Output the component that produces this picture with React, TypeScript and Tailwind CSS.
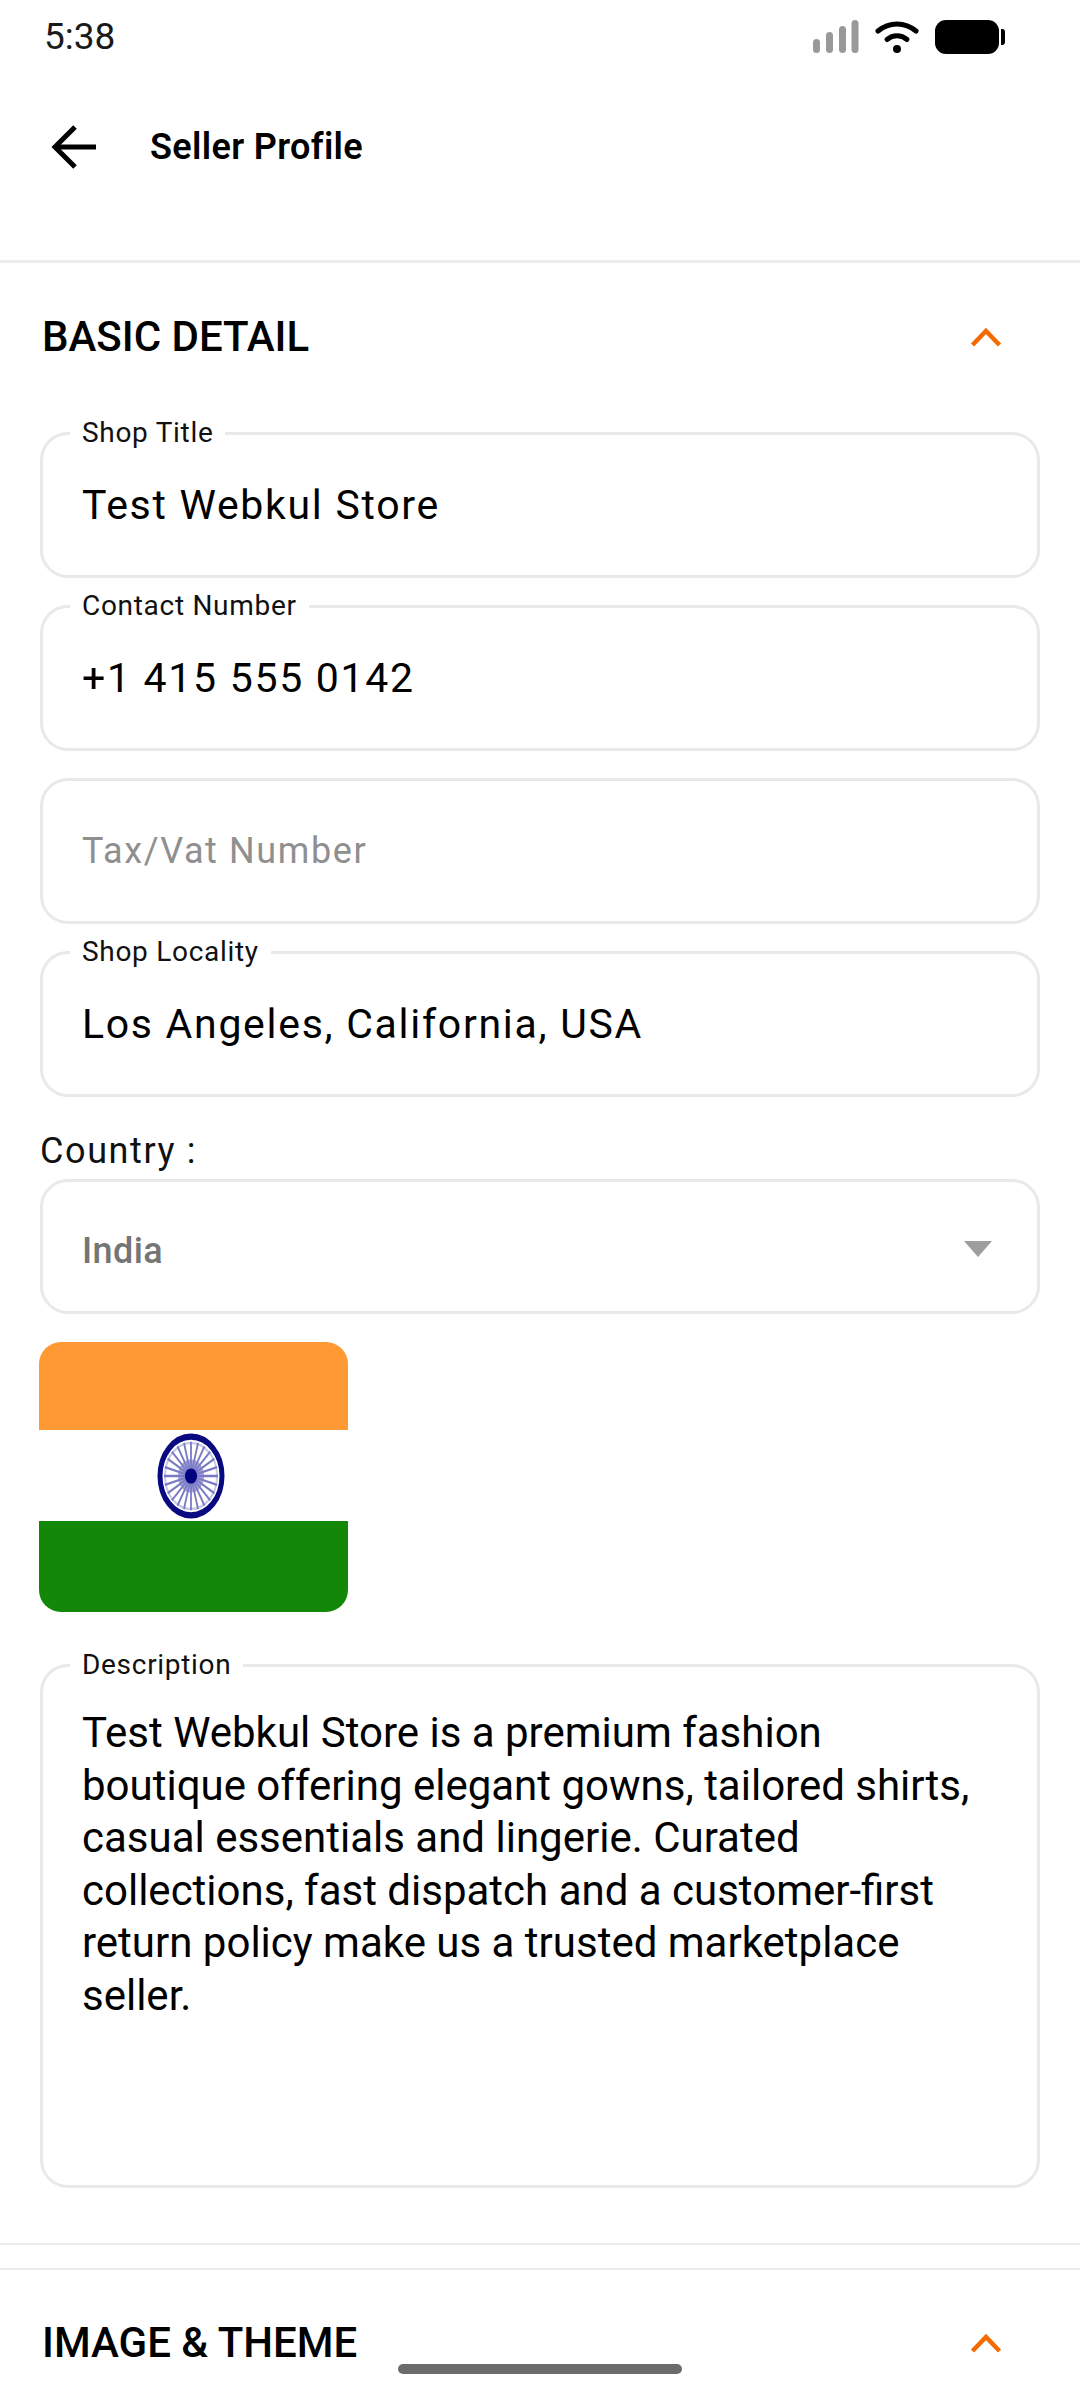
const FONT = "font-['Roboto',sans-serif]";

function SignalIcon() {
  return (
    <svg width="46" height="34" viewBox="0 0 46 34" className="text-[#999999]" fill="currentColor">
      <rect x="0" y="19" width="7" height="14" rx="3.5" />
      <rect x="13" y="12" width="7" height="21" rx="3.5" />
      <rect x="26" y="6" width="7" height="27" rx="3.5" />
      <rect x="38.5" y="0" width="7" height="33" rx="3.5" />
    </svg>
  );
}

function WifiIcon() {
  return (
    <svg width="44" height="34" viewBox="0 0 44 34" fill="none" stroke="#000" strokeLinecap="round">
      <path d="M3 11 C14 1.5 30 1.5 41 11" strokeWidth="5" />
      <path d="M12 19.5 C18 14.5 26 14.5 32 19.5" strokeWidth="5" />
      <circle cx="22" cy="29" r="4" fill="#000" stroke="none" />
    </svg>
  );
}

function BatteryIcon() {
  return (
    <div className="flex items-center">
      <div className="w-[64px] h-[34px] bg-black rounded-[11px]" />
      <div className="ml-[2px] w-[4px] h-[16px] bg-black rounded-r-[3px]" />
    </div>
  );
}

function Chevron() {
  return (
    <svg width="32" height="20" viewBox="0 0 32 20" fill="none" stroke="#f56a00" strokeWidth="4.5">
      <path d="M2.5 18 L16 4 L29.5 18" />
    </svg>
  );
}

function Field({ label, value, placeholder }: { label?: string; value?: string; placeholder?: string }) {
  return (
    <div className="relative h-[146px] border-[3px] border-[#e9e9e9] rounded-[28px] flex items-center pl-[39px] pr-[40px]">
      {label && (
        <span className="absolute left-[27px] top-[-18px] bg-white px-[12px] text-[28px] leading-[32px] tracking-[0.7px] text-[#111111]">
          {label}
        </span>
      )}
      {value && <span className="text-[41px] leading-[48px] tracking-[1.7px] text-black">{value}</span>}
      {placeholder && <span className="text-[36px] leading-[48px] tracking-[1.6px] text-[#8f8f8f]">{placeholder}</span>}
    </div>
  );
}

function IndiaFlag() {
  const spokes = Array.from({ length: 24 }, (_, i) => (i * 360) / 24);
  return (
    <div className="w-[309px] h-[270px] rounded-[22px] overflow-hidden flex flex-col">
      <div className="h-[88px] bg-[#ff9933]" />
      <div className="h-[91px] bg-white flex items-center justify-center pr-[6px]">
        <svg width="70" height="88" viewBox="0 0 70 88">
          <g transform="translate(35 44) scale(1 1.27)">
            <circle r="31" fill="none" stroke="#0a0a80" strokeWidth="5" />
            <circle r="26" fill="none" stroke="#c9c9ea" strokeWidth="2" />
            {spokes.map((a) => (
              <line key={a} x1="0" y1="0" x2="0" y2="-27" stroke="#7a7ac4" strokeWidth="1.8" transform={`rotate(${a})`} />
            ))}
            <circle r="13" fill="#7d7dc8" opacity="0.7" />
            <circle r="6" fill="#000080" />
          </g>
        </svg>
      </div>
      <div className="flex-1 bg-[#138808]" />
    </div>
  );
}

export default function App() {
  return (
    <div className={`${FONT} relative w-[1080px] h-[2400px] overflow-hidden bg-white text-black`}>
      {/* status bar */}
      <div className="h-[72px] pt-[2px] flex items-center justify-between pl-[44px] pr-[75px]">
        <span className="text-[37px] leading-[42px] text-[#1a1a1a]">5:38</span>
        <div className="flex items-center gap-[16px]">
          <SignalIcon />
          <WifiIcon />
          <BatteryIcon />
        </div>
      </div>

      {/* app bar */}
      <div className="h-[188px] border-b-[3px] border-[#ececec] box-content">
        <div className="h-[150px] flex items-center pl-[51px]">
          <svg width="48" height="44" viewBox="0 0 48 44" fill="none" stroke="#000" strokeWidth="5">
            <path d="M45 22 H5" />
            <path d="M24 2 L4 22 L24 42" />
          </svg>
          <span className="ml-[51px] text-[36px] leading-[44px] font-semibold tracking-[0.35px]">Seller Profile</span>
        </div>
      </div>

      {/* basic detail */}
      <div className="px-[40px]">
        <div className="h-[169px] flex items-center justify-between pr-[38px] pb-[22px]">
          <span className="ml-[2px] text-[42px] leading-[48px] font-medium text-black">BASIC DETAIL</span>
          <Chevron />
        </div>
        <div className="flex flex-col gap-[27px]">
          <Field label="Shop Title" value="Test Webkul Store" />
          <Field label="Contact Number" value="+1 415 555 0142" />
          <Field placeholder="Tax/Vat Number" />
          <Field label="Shop Locality" value="Los Angeles, California, USA" />
        </div>
        <div className="mt-[33px] text-[36px] leading-[42px] tracking-[1.6px] text-[#111111]">Country :</div>
        <div className="mt-[7px] h-[135px] border-[3px] border-[#e9e9e9] rounded-[28px] flex items-center justify-between pl-[39px] pr-[45px]">
          <span className="pt-[8px] text-[36px] leading-[44px] font-medium tracking-[0.4px] text-[#757575]">India</span>
          <svg width="28" height="16" viewBox="0 0 28 16" className="mt-[4px]">
            <path d="M0 0 H28 L14 16 Z" fill="#9e9e9e" />
          </svg>
        </div>
        <div className="mt-[28px] -ml-px">
          <IndiaFlag />
        </div>
        <div className="relative mt-[52px] h-[524px] border-[3px] border-[#e9e9e9] rounded-[28px] pl-[39px] pr-[60px] pt-[40px]">
          <span className="absolute left-[27px] top-[-18px] bg-white px-[12px] text-[28px] leading-[32px] tracking-[0.7px] text-[#111111]">
            Description
          </span>
          <p className="text-[42px] leading-[52.6px] text-black">
            Test Webkul Store is a premium fashion boutique offering elegant gowns, tailored shirts, casual essentials
            and lingerie. Curated collections, fast dispatch and a customer-first return policy make us a trusted
            marketplace seller.
          </p>
        </div>
      </div>

      <div className="mt-[55px] h-[23px] border-y-[2px] border-[#ececec] box-content" />

      {/* image & theme */}
      <div className="h-[130px] flex items-center justify-between pl-[42px] pr-[78px] pt-[16px]">
        <span className="text-[42px] leading-[48px] font-medium text-black">IMAGE &amp; THEME</span>
        <Chevron />
      </div>

      {/* gesture bar */}
      <div className="absolute left-[398px] top-[2364px] w-[284px] h-[10px] rounded-full bg-[#6b6b6b]" />
    </div>
  );
}
